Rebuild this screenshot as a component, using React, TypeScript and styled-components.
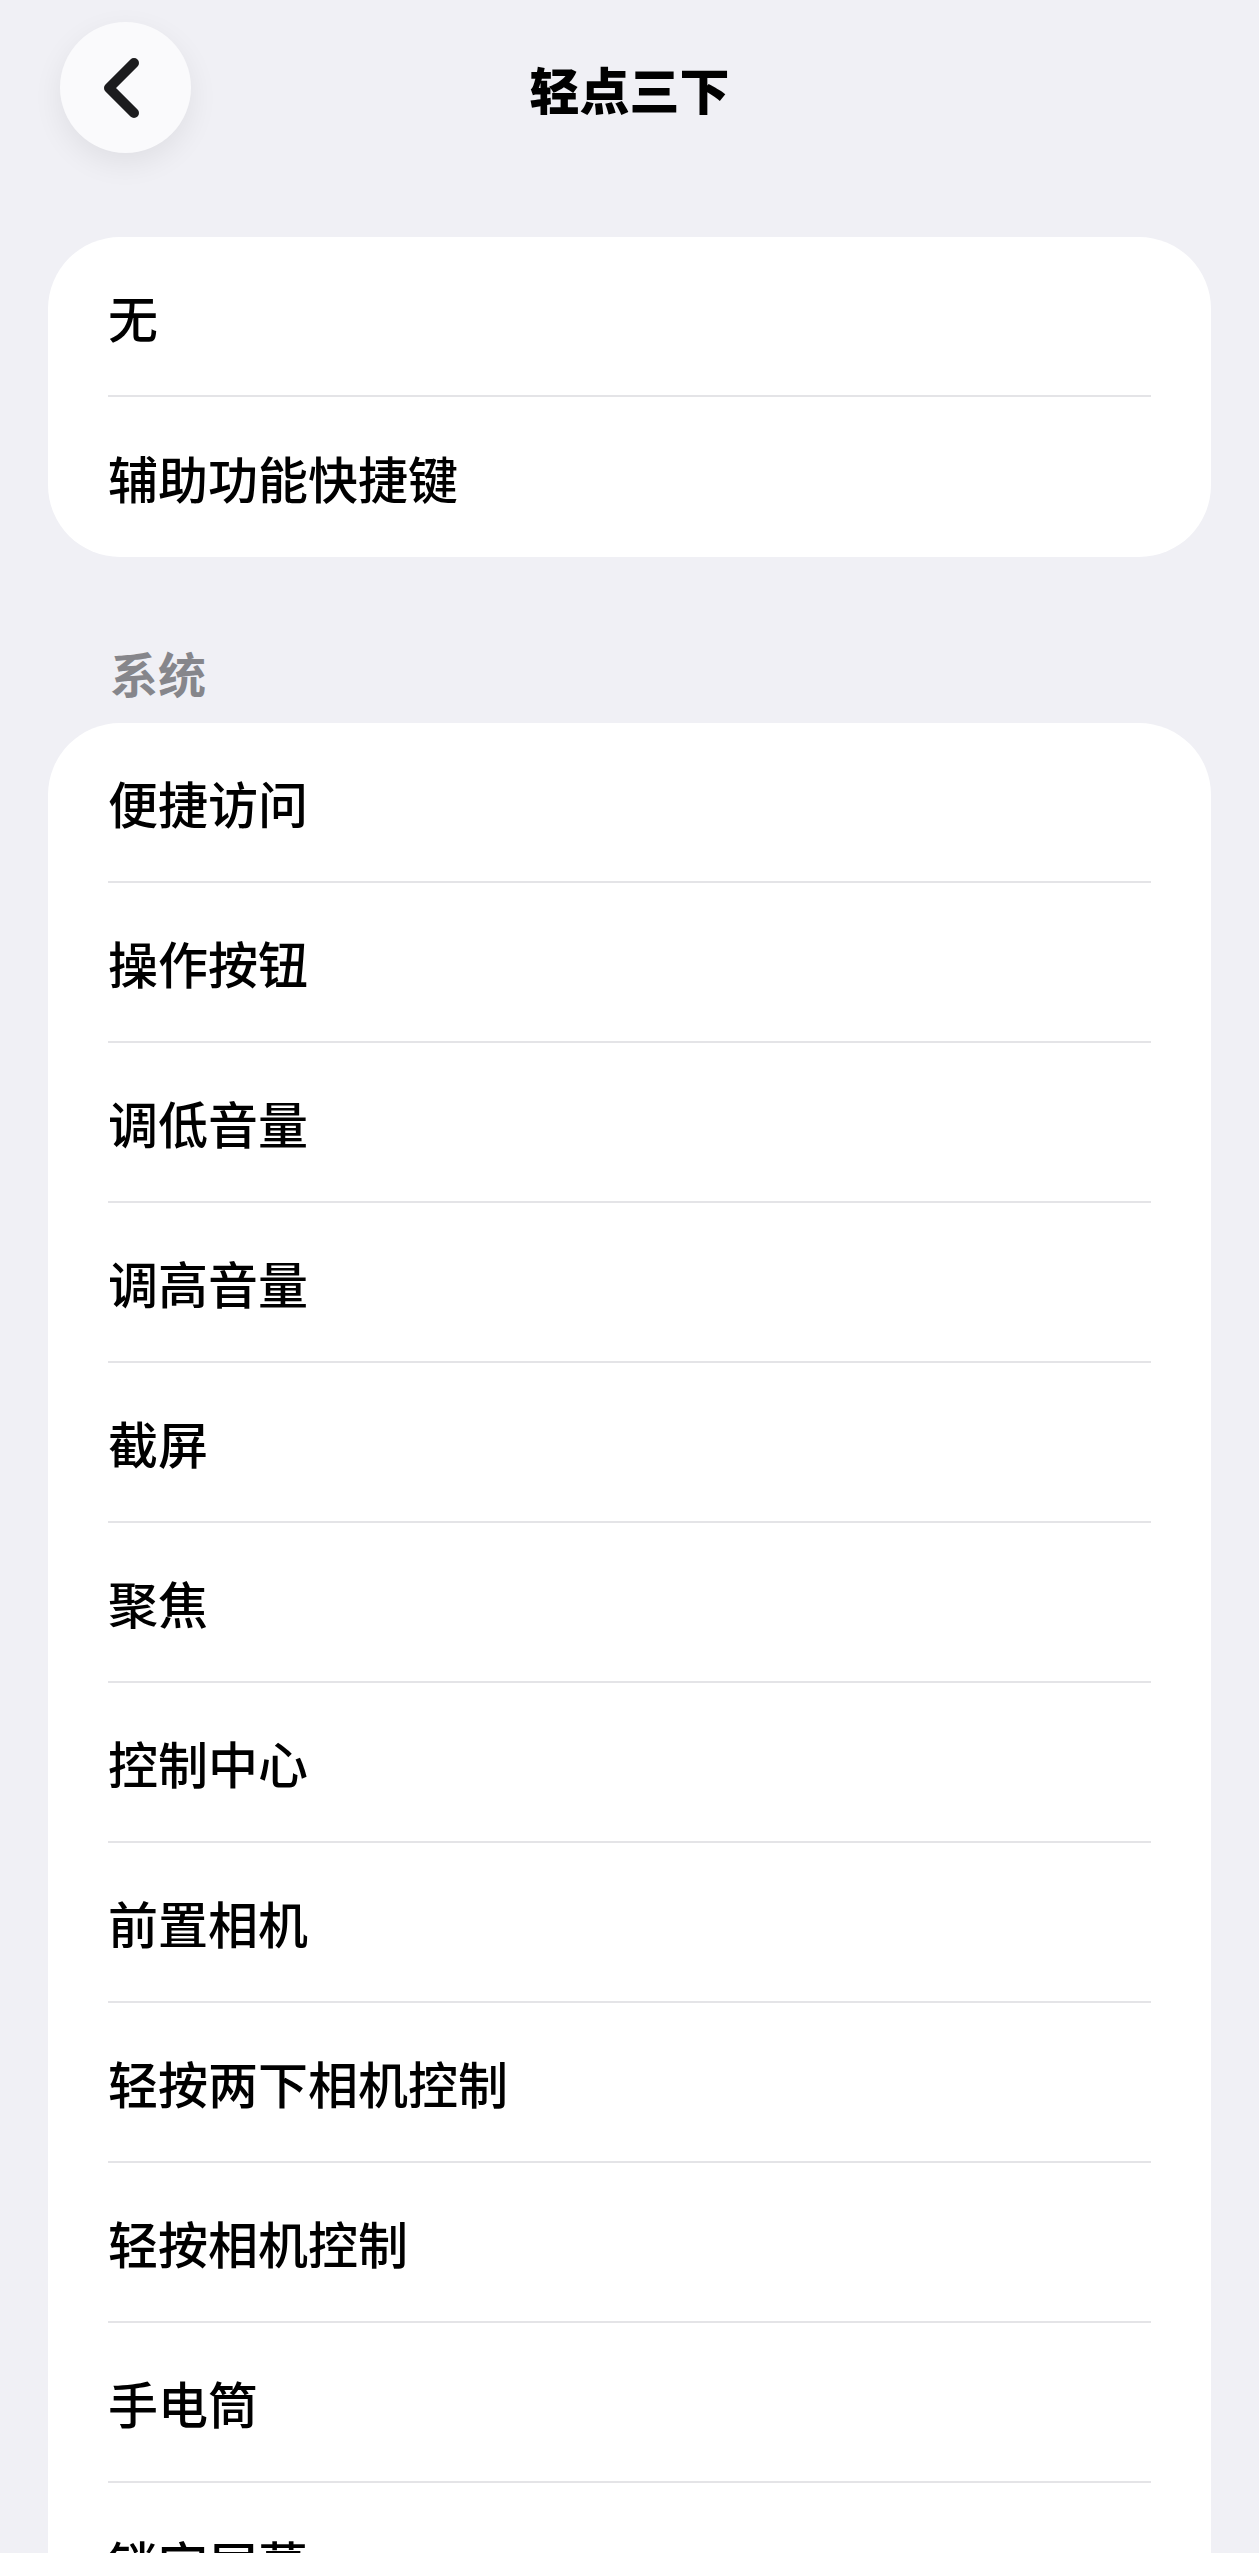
import styled, { createGlobalStyle } from 'styled-components';

const GlobalStyle = createGlobalStyle`
  html, body {
    margin: 0;
    padding: 0;
    background: #f0f0f5;
  }
  body {
    font-family: 'Noto Sans CJK SC', 'Noto Sans', sans-serif;
    color: #000;
  }
`;

const Page = styled.div`
  height: 100vh;
  overflow: hidden;
  box-sizing: border-box;
  padding: 0 48px;
  background: #f0f0f5;
`;

const NavBar = styled.div`
  display: grid;
  grid-template-columns: 131px 1fr 131px;
  align-items: center;
  padding: 22px 12px 0;
`;

const BackButton = styled.button`
  width: 131px;
  height: 131px;
  border: none;
  border-radius: 50%;
  background: #fafafc;
  box-shadow: 0 10px 30px rgba(0, 0, 0, 0.07);
  display: flex;
  align-items: center;
  justify-content: center;
  padding: 0 10px 0 0;
  cursor: pointer;
`;

const Title = styled.h1`
  margin: 0;
  text-align: center;
  font-size: 50px;
  font-weight: 900;
  line-height: 1.2;
  color: #000;
`;

const Card = styled.div<{ $top: number }>`
  margin-top: ${p => p.$top}px;
  background: #fff;
  border-radius: 72px;
  padding: 0 60px;
  overflow: hidden;
`;

const Row = styled.div`
  height: 158px;
  display: flex;
  align-items: center;
  font-size: 50px;
  font-weight: 500;
  color: #000;
  border-bottom: 2px solid #e4e4e7;
  &:last-child {
    border-bottom: none;
    height: 160px;
  }
`;

const SectionHeader = styled.div`
  margin: 86px 0 0;
  padding-left: 62px;
  font-size: 48px;
  line-height: 58px;
  font-weight: 700;
  color: #86868b;
`;

const ChevronLeft = () => (
  <svg width="40" height="64" viewBox="0 0 40 64" fill="none">
    <path
      d="M33 7 L8 32 L33 57"
      stroke="#1c1c1e"
      strokeWidth="10"
      strokeLinecap="round"
      strokeLinejoin="round"
    />
  </svg>
);

const topOptions = ['无', '辅助功能快捷键'];

const systemOptions = [
  '便捷访问',
  '操作按钮',
  '调低音量',
  '调高音量',
  '截屏',
  '聚焦',
  '控制中心',
  '前置相机',
  '轻按两下相机控制',
  '轻按相机控制',
  '手电筒',
  '锁定屏幕',
  '静音',
];

const App = () => (
  <>
    <GlobalStyle />
    <Page>
      <NavBar>
        <BackButton aria-label="返回">
          <ChevronLeft />
        </BackButton>
        <Title>轻点三下</Title>
        <div />
      </NavBar>

      <Card $top={84}>
        {topOptions.map(o => (
          <Row key={o}>{o}</Row>
        ))}
      </Card>

      <SectionHeader>系统</SectionHeader>
      <Card $top={22}>
        {systemOptions.map(o => (
          <Row key={o}>{o}</Row>
        ))}
      </Card>
    </Page>
  </>
);

export default App;
